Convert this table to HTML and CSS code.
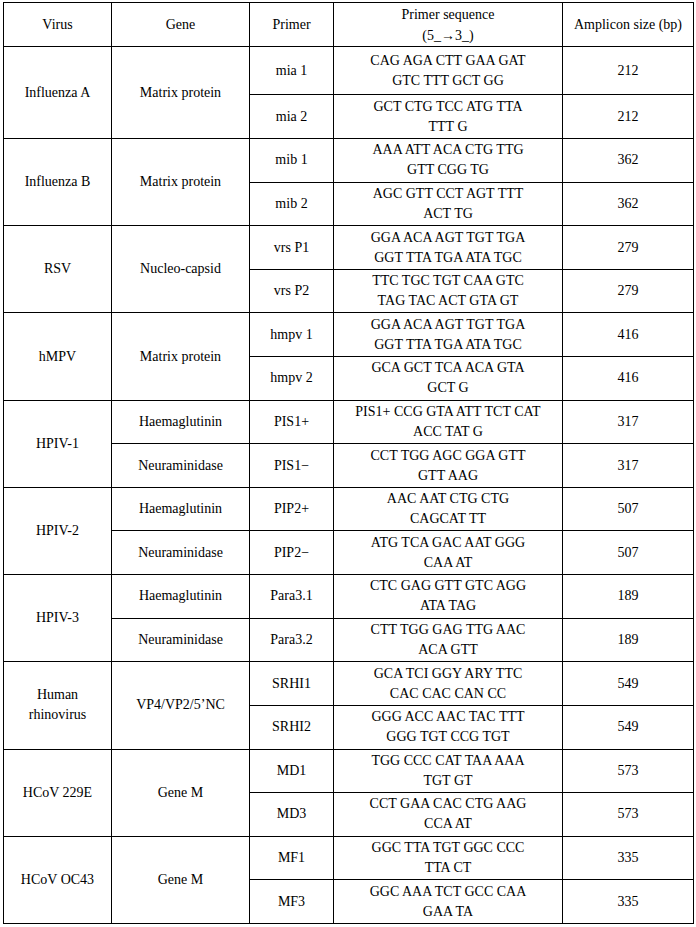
FILE: index.html
```html
<!DOCTYPE html>
<html>
<head>
<meta charset="utf-8">
<link rel="stylesheet" href="styles.css">
</head>
<body>
<table class="primers">
  <colgroup>
    <col class="c-virus"><col class="c-gene"><col class="c-primer"><col class="c-seq"><col class="c-size">
  </colgroup>
  <thead>
    <tr class="head">
      <th>Virus</th><th>Gene</th><th>Primer</th><th>Primer sequence<br>(5_→3_)</th><th>Amplicon size (bp)</th>
    </tr>
  </thead>
  <tbody>
    <tr class="first"><td rowspan="2">Influenza A</td><td rowspan="2">Matrix protein</td><td>mia 1</td><td>CAG AGA CTT GAA GAT<br>GTC TTT GCT GG</td><td>212</td></tr>
    <tr class="second"><td>mia 2</td><td>GCT CTG TCC ATG TTA<br>TTT G</td><td>212</td></tr>
    <tr><td rowspan="2">Influenza B</td><td rowspan="2">Matrix protein</td><td>mib 1</td><td>AAA ATT ACA CTG TTG<br>GTT CGG TG</td><td>362</td></tr>
    <tr><td>mib 2</td><td>AGC GTT CCT AGT TTT<br>ACT TG</td><td>362</td></tr>
    <tr><td rowspan="2">RSV</td><td rowspan="2">Nucleo-capsid</td><td>vrs P1</td><td>GGA ACA AGT TGT TGA<br>GGT TTA TGA ATA TGC</td><td>279</td></tr>
    <tr><td>vrs P2</td><td>TTC TGC TGT CAA GTC<br>TAG TAC ACT GTA GT</td><td>279</td></tr>
    <tr><td rowspan="2">hMPV</td><td rowspan="2">Matrix protein</td><td>hmpv 1</td><td>GGA ACA AGT TGT TGA<br>GGT TTA TGA ATA TGC</td><td>416</td></tr>
    <tr><td>hmpv 2</td><td>GCA GCT TCA ACA GTA<br>GCT G</td><td>416</td></tr>
    <tr><td rowspan="2">HPIV-1</td><td>Haemaglutinin</td><td>PIS1+</td><td>PIS1+ CCG GTA ATT TCT CAT<br>ACC TAT G</td><td>317</td></tr>
    <tr><td>Neuraminidase</td><td>PIS1−</td><td>CCT TGG AGC GGA GTT<br>GTT AAG</td><td>317</td></tr>
    <tr><td rowspan="2">HPIV-2</td><td>Haemaglutinin</td><td>PIP2+</td><td>AAC AAT CTG CTG<br>CAGCAT TT</td><td>507</td></tr>
    <tr><td>Neuraminidase</td><td>PIP2−</td><td>ATG TCA GAC AAT GGG<br>CAA AT</td><td>507</td></tr>
    <tr><td rowspan="2">HPIV-3</td><td>Haemaglutinin</td><td>Para3.1</td><td>CTC GAG GTT GTC AGG<br>ATA TAG</td><td>189</td></tr>
    <tr><td>Neuraminidase</td><td>Para3.2</td><td>CTT TGG GAG TTG AAC<br>ACA GTT</td><td>189</td></tr>
    <tr><td rowspan="2">Human<br>rhinovirus</td><td rowspan="2">VP4/VP2/5’NC</td><td>SRHI1</td><td>GCA TCI GGY ARY TTC<br>CAC CAC CAN CC</td><td>549</td></tr>
    <tr><td>SRHI2</td><td>GGG ACC AAC TAC TTT<br>GGG TGT CCG TGT</td><td>549</td></tr>
    <tr><td rowspan="2">HCoV 229E</td><td rowspan="2">Gene M</td><td>MD1</td><td>TGG CCC CAT TAA AAA<br>TGT GT</td><td>573</td></tr>
    <tr><td>MD3</td><td>CCT GAA CAC CTG AAG<br>CCA AT</td><td>573</td></tr>
    <tr><td rowspan="2">HCoV OC43</td><td rowspan="2">Gene M</td><td>MF1</td><td>GGC TTA TGT GGC CCC<br>TTA CT</td><td>335</td></tr>
    <tr><td>MF3</td><td>GGC AAA TCT GCC CAA<br>GAA TA</td><td>335</td></tr>
  </tbody>
</table>
</body>
</html>
```
FILE: styles.css
```css
html, body {
  margin: 0;
  padding: 0;
  background: #fff;
}
body {
  padding: 2px 0 0 3px;
  font-family: "Liberation Serif", "Times New Roman", serif;
  font-size: 14px;
  color: #000;
}
.primers {
  border-collapse: collapse;
  table-layout: fixed;
  width: 690px;
}
.c-virus { width: 108px; }
.c-gene { width: 138px; }
.c-primer { width: 84px; }
.c-seq { width: 229px; }
.c-size { width: 131px; }
.primers th,
.primers td {
  border: 1px solid #000;
  padding: 0 4px;
  text-align: center;
  vertical-align: middle;
  font-weight: normal;
  line-height: 20px;
}
.primers tr {
  height: 43.61px;
}
.primers tr.head {
  height: 44px;
}
.primers tr.first {
  height: 48px;
}
.primers tr.second {
  height: 44px;
}
.primers .head th {
  line-height: 21px;
}
```
